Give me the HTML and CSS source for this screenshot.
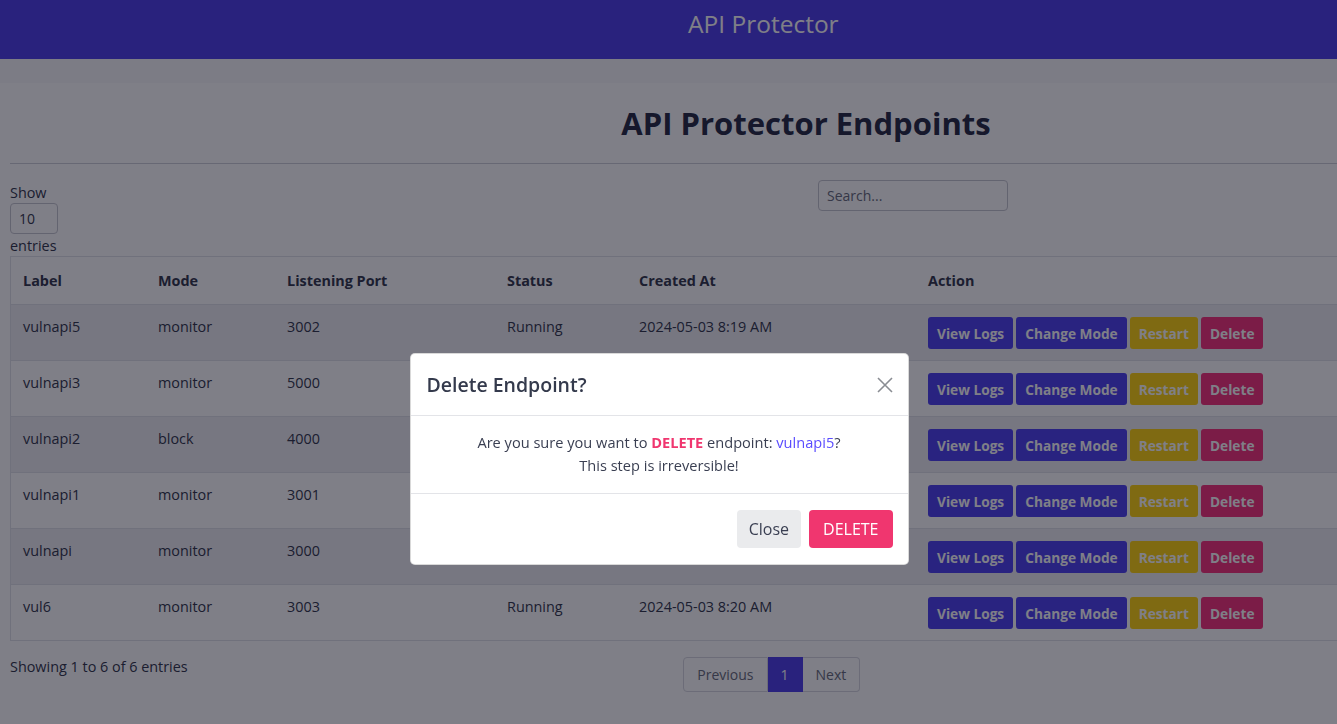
FILE: index.html
```html
<!DOCTYPE html>
<html>
<head>
<meta charset="utf-8">
<title>API Protector</title>
<link rel="stylesheet" href="styles.css">
</head>
<body>
<nav class="topbar"><span class="brand">API Protector</span></nav>
<main class="card">
  <h1 class="title">API Protector Endpoints</h1>
  <hr class="rule">
  <div class="dt-top">
    <div class="dt-col">
      <label class="len">Show <span class="select">10</span> entries</label>
    </div>
    <div class="dt-col dt-col-right">
      <input class="search" type="text" placeholder="Search...">
    </div>
  </div>
  <table class="grid">
    <thead>
      <tr><th class="c-label">Label</th><th class="c-mode">Mode</th><th class="c-port">Listening Port</th><th class="c-status">Status</th><th class="c-created">Created At</th><th>Action</th></tr>
    </thead>
    <tbody>
      <tr class="odd"><td>vulnapi5</td><td>monitor</td><td>3002</td><td>Running</td><td>2024-05-03 8:19 AM</td><td class="actions"><button class="btn b-primary">View Logs</button><button class="btn b-primary">Change Mode</button><button class="btn b-warn">Restart</button><button class="btn b-danger">Delete</button></td></tr>
      <tr><td>vulnapi3</td><td>monitor</td><td>5000</td><td>Running</td><td>2024-05-03 8:19 AM</td><td class="actions"><button class="btn b-primary">View Logs</button><button class="btn b-primary">Change Mode</button><button class="btn b-warn">Restart</button><button class="btn b-danger">Delete</button></td></tr>
      <tr class="odd"><td>vulnapi2</td><td>block</td><td>4000</td><td>Running</td><td>2024-05-03 8:18 AM</td><td class="actions"><button class="btn b-primary">View Logs</button><button class="btn b-primary">Change Mode</button><button class="btn b-warn">Restart</button><button class="btn b-danger">Delete</button></td></tr>
      <tr><td>vulnapi1</td><td>monitor</td><td>3001</td><td>Running</td><td>2024-05-03 8:18 AM</td><td class="actions"><button class="btn b-primary">View Logs</button><button class="btn b-primary">Change Mode</button><button class="btn b-warn">Restart</button><button class="btn b-danger">Delete</button></td></tr>
      <tr class="odd"><td>vulnapi</td><td>monitor</td><td>3000</td><td>Running</td><td>2024-05-03 8:17 AM</td><td class="actions"><button class="btn b-primary">View Logs</button><button class="btn b-primary">Change Mode</button><button class="btn b-warn">Restart</button><button class="btn b-danger">Delete</button></td></tr>
      <tr><td>vul6</td><td>monitor</td><td>3003</td><td>Running</td><td>2024-05-03 8:20 AM</td><td class="actions"><button class="btn b-primary">View Logs</button><button class="btn b-primary">Change Mode</button><button class="btn b-warn">Restart</button><button class="btn b-danger">Delete</button></td></tr>
    </tbody>
  </table>
  <div class="dt-bottom">
    <div class="info">Showing 1 to 6 of 6 entries</div>
    <div class="pager">
      <span class="pg disabled">Previous</span><span class="pg active">1</span><span class="pg disabled">Next</span>
    </div>
  </div>
</main>

<div class="backdrop"></div>
<div class="modal-wrap">
  <div class="modal">
    <div class="m-head">
      <h5 class="m-title">Delete Endpoint?</h5>
      <span class="m-close"><svg width="16" height="16" viewBox="0 0 16 16"><path d="M1 1L15 15M15 1L1 15" stroke="#8a8d93" stroke-width="1.6" fill="none"/></svg></span>
    </div>
    <div class="m-body">
      <p>Are you sure you want to <strong class="danger-word">DELETE</strong> endpoint: <span class="ep">vulnapi5</span>?<br>This step is irreversible!</p>
    </div>
    <div class="m-foot">
      <button class="mbtn m-secondary">Close</button>
      <button class="mbtn m-danger">DELETE</button>
    </div>
  </div>
</div>
</body>
</html>
```
FILE: styles.css
```css
html, body {
  margin: 0;
  padding: 0;
}
body {
  font-family: "Open Sans", "DejaVu Sans", sans-serif;
  color: #383c50;
  background: #f8f8fa;
  overflow: hidden;
  height: 724px;
  width: 1337px;
}
.topbar {
  height: 59px;
  background: #5244ea;
  display: flex;
  align-items: center;
  padding-left: 688px;
  box-sizing: border-box;
  width: 1612px;
}
.brand {
  color: #ffffff;
  font-size: 24.5px;
  line-height: 30px;
  margin-top: -12px;
}
.card {
  display: block;
  margin-top: 24px;
  background: #ffffff;
  width: 1592px;
  padding: 0 10px 40px 10px;
  font-size: 14.4px;
}
.title {
  margin: 0;
  padding-top: 20px;
  text-align: center;
  font-size: 31px;
  line-height: 40px;
  font-weight: 700;
  color: #2c3048;
}
.rule {
  margin: 20px 0 16px;
  border: 0;
  border-top: 1px solid #cfd0d8;
}
.dt-top {
  display: grid;
  grid-template-columns: 1fr 1fr;
}
.dt-col-right {
  padding-left: 12px;
}
.len {
  display: block;
  width: 60px;
  font-size: 14.4px;
  line-height: 23px;
  padding-top: 1px;
}
.select {
  display: block;
  width: 48px;
  height: 31px;
  box-sizing: border-box;
  border: 1px solid #c7c8d0;
  border-radius: 4px;
  padding-left: 8px;
  line-height: 29px;
  font-size: 14px;
  margin-top: -1px;
}
.search {
  width: 190px;
  height: 31px;
  box-sizing: border-box;
  border: 1px solid #c7c8d0;
  border-radius: 4px;
  padding: 0 8px;
  font-family: "Open Sans", sans-serif;
  font-size: 14px;
  color: #383c50;
  background: #fff;
}
.search::placeholder {
  color: #6c7080;
}
.grid {
  margin-top: -1px;
  width: 100%;
  border-collapse: collapse;
  border: 1px solid #e1e2e8;
  font-size: 14.4px;
}
.grid th, .grid td {
  text-align: left;
  vertical-align: top;
  padding: 12px 12px 11px;
  line-height: 24px;
  border-bottom: 1px solid #e1e2e8;
}
.grid th {
  font-weight: 700;
}
.grid td {
  padding-top: 10px;
  padding-bottom: 13px;
}
.grid td.actions {
  padding-top: 12px;
  padding-bottom: 11px;
}
.grid tr.odd td {
  background: #efeff3;
}
.c-label { width: 111px; }
.c-mode { width: 105px; }
.c-port { width: 196px; }
.c-status { width: 108px; }
.c-created { width: 265px; }
.actions {
  white-space: nowrap;
}
.btn {
  height: 32px;
  border: 0;
  border-radius: 3px;
  padding: 0 9px;
  margin-right: 3px;
  font-family: "Open Sans", sans-serif;
  font-weight: 700;
  font-size: 13.7px;
  color: #ffffff;
  vertical-align: top;
}
.b-primary { background: #5246f0; }
.b-warn { background: #ffd414; }
.b-danger { background: #f6387e; }
.dt-bottom {
  display: grid;
  grid-template-columns: 5fr 7fr;
  margin-top: 15px;
}
.info {
  font-size: 14.4px;
  line-height: 22px;
}
.pager {
  display: flex;
  padding-left: 10px;
  padding-top: 1px;
}
.pg {
  display: block;
  height: 35px;
  box-sizing: border-box;
  line-height: 33px;
  border: 1px solid #d8d9e0;
  padding: 0 13px;
  font-size: 14px;
  color: #6c7080;
  background: #fff;
}
.pg + .pg { border-left: 0; }
.pg:first-child { border-radius: 4px 0 0 4px; }
.pg:last-child { border-radius: 0 4px 4px 0; }
.pg.active {
  background: #5244ea;
  border-color: #5244ea;
  color: #fff;
  padding: 0 13px;
}
.backdrop {
  position: fixed;
  inset: 0;
  background: rgba(0, 0, 16, 0.5);
}
.modal-wrap {
  position: fixed;
  inset: 0;
  display: flex;
  justify-content: center;
  align-items: flex-start;
  padding-top: 353px;
  padding-right: 19px;
}
.modal {
  width: 499px;
  background: #fff;
  border-radius: 5px;
  border: 1px solid rgba(0,0,0,0.15);
  box-sizing: border-box;
  font-family: "Open Sans", sans-serif;
}
.m-head {
  display: flex;
  align-items: center;
  justify-content: space-between;
  height: 61px;
  padding: 0 15px 0 16px;
  border-bottom: 1px solid #e3e4e8;
}
.m-title {
  margin: 0;
  font-size: 19.5px;
  font-weight: 600;
  color: #343a4c;
  line-height: 30px;
}
.m-close {
  display: flex;
}
.m-body {
  padding: 15px 16px 16px;
  border-bottom: 1px solid #e3e4e8;
  text-align: center;
}
.m-body p {
  margin: 0;
  font-size: 14.6px;
  line-height: 23px;
  color: #3a3f52;
}
.danger-word {
  color: #f0366f;
  font-weight: 700;
}
.ep {
  color: #5a4cff;
}
.m-foot {
  display: flex;
  justify-content: flex-end;
  gap: 8px;
  padding: 16px 15px 16px;
}
.mbtn {
  height: 38px;
  border: 0;
  border-radius: 4px;
  padding: 0 12px;
  font-family: "Open Sans", sans-serif;
  font-size: 16px;
}
.m-secondary {
  background: #eaebed;
  color: #3a3f52;
}
.m-danger {
  background: #f0366f;
  color: #fff;
  padding: 0 14px;
}
```
